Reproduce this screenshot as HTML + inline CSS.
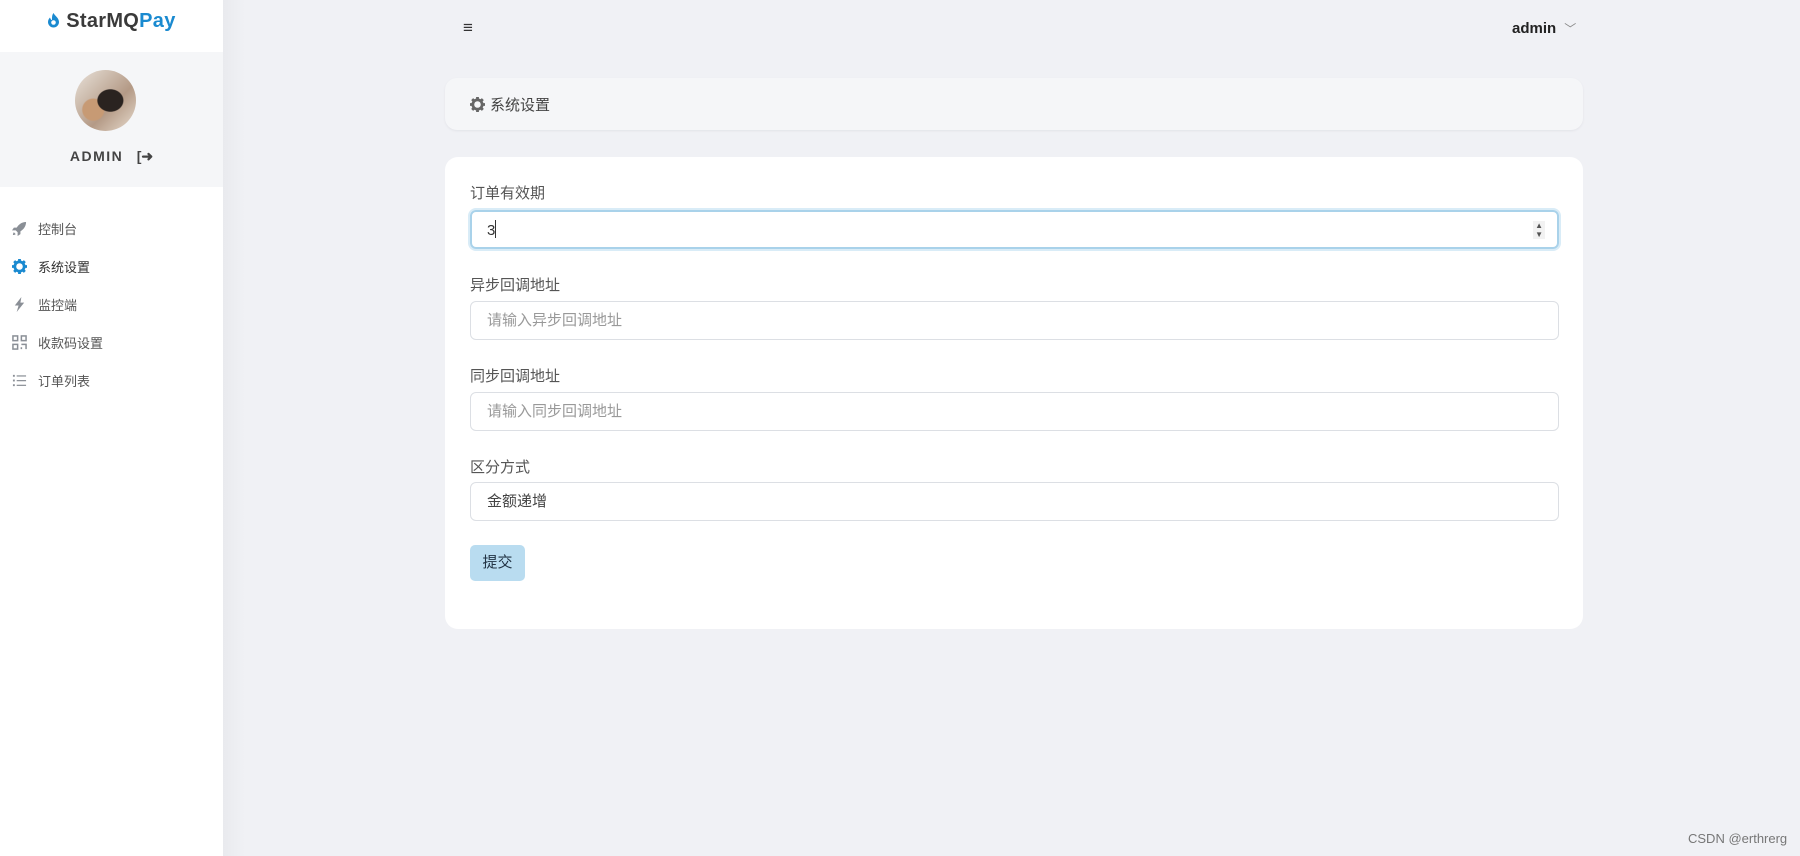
<!DOCTYPE html>
<html><head><meta charset="utf-8">
<style>
*{box-sizing:border-box;margin:0;padding:0}
body{width:1800px;height:856px;overflow:hidden;background:#f0f1f5;font-family:"Liberation Sans","Noto Sans CJK SC",sans-serif;position:relative;color:#555}
.side{position:absolute;left:0;top:0;width:223px;height:856px;background:#fff}
.shadow{position:absolute;left:223px;top:0;width:22px;height:856px;background:linear-gradient(90deg,#e9eaee,#f0f1f5)}
.logo{position:absolute;top:10px;left:0;width:223px;text-align:center;font-weight:bold;font-size:20px;color:#3a3a3a;letter-spacing:.3px}
.logo b{color:#1a8ad0}
.prof{position:absolute;top:52px;left:0;width:223px;height:135px;background:#f5f6f8}
.av{position:absolute;left:75px;top:18px;width:61px;height:61px;border-radius:50%;background:radial-gradient(ellipse at 58% 50%,#2a2320 0 25%,transparent 27%),radial-gradient(circle at 30% 65%,#c79a74 0 18%,transparent 20%),linear-gradient(135deg,#e9e2da,#b49a86 60%,#e8dccf)}
.adm{position:absolute;top:96px;left:0;width:223px;text-align:center;font-weight:bold;font-size:14px;letter-spacing:1.5px;color:#444}
.menu{position:absolute;left:0;top:209px;width:223px}
.mi{height:38px;display:flex;align-items:center;font-size:13px;color:#555}
.mi svg{margin-left:12px;margin-right:11px;width:15px;height:15px}
.top-h{position:absolute;left:463px;top:18px;font-size:17px;color:#333}
.user{position:absolute;left:1512px;top:20px;font-weight:bold;font-size:15px;color:#222}
.user span{color:#888;font-weight:normal;font-size:12px;margin-left:8px}
.hcard{position:absolute;left:445px;top:78px;width:1138px;height:52px;background:#f5f6f8;border-radius:12px;box-shadow:0 1px 2px #e2e3e8;font-size:15px;color:#444;display:flex;align-items:center;padding-left:25px}
.card{position:absolute;left:445px;top:157px;width:1138px;height:472px;background:#fff;border-radius:13px}
.lbl{position:absolute;left:25px;font-size:15px;color:#555}
.inp{position:absolute;left:25px;width:1089px;height:39px;border:1px solid #dcdfe4;border-radius:6px;font-size:15px;color:#999;padding-left:16px;line-height:37px}
.inp.f{border:2px solid #a9d2ea;box-shadow:0 0 0 2px #d9ecf7;color:#333;padding-left:15px}
.btn{position:absolute;left:25px;top:388px;width:55px;height:36px;background:#b9dcf0;border-radius:5px;font-size:15px;color:#234;text-align:center;line-height:36px}
.wm{position:absolute;left:1688px;top:831px;font-size:13px;color:#777}
</style></head><body>
<div class="side">
 <div class="logo"><svg width="13" height="16" viewBox="0 0 13 16" style="vertical-align:-1px"><path d="M6.5 1C8 4 12 6 12 10a5.5 5.5 0 0 1-11 0c0-2 1-3.5 2-4.5C3.5 7 4 8 5 8 5 5 5 3 6.5 1z" fill="#1a8ad0"/><circle cx="6.5" cy="10.5" r="2.3" fill="#fff"/></svg> StarMQ<b>Pay</b></div>
 <div class="prof"><div class="av"></div><div class="adm">ADMIN <span style="margin-left:8px;font-size:14px;letter-spacing:0">[➜</span></div></div>
 <div class="menu">
  <div class="mi"><svg viewBox="0 0 16 16"><path d="M15 1C10 1 7 4 5 7L2 7 0 10l4 0 2 2 0 4 3-2 0-3c3-2 6-5 6-10zM2 12c-1 1-1 3-1 3s2 0 3-1z" fill="#8a8f96"/></svg>控制台</div>
  <div class="mi" style="color:#333"><svg viewBox="0 0 16 16"><circle cx="8" cy="8" r="5" fill="none" stroke="#1a8ad0" stroke-width="3"/><g stroke="#1a8ad0" stroke-width="3"><path d="M8 0v3M8 13v3M0 8h3M13 8h3M2.3 2.3l2 2M11.7 11.7l2 2M2.3 13.7l2-2M11.7 4.3l2-2"/></g><circle cx="8" cy="8" r="2" fill="#fff"/></svg>系统设置</div>
  <div class="mi"><svg viewBox="0 0 16 16"><path d="M10 0L3 9h4l-2 7 8-10H9z" fill="#8a8f96"/></svg>监控端</div>
  <div class="mi"><svg viewBox="0 0 16 16" fill="none" stroke="#8a8f96" stroke-width="1.6"><rect x="1" y="1" width="5" height="5"/><rect x="10" y="1" width="5" height="5"/><rect x="1" y="10" width="5" height="5"/><path d="M10 10h5v5M10 13v2"/></svg>收款码设置</div>
  <div class="mi"><svg viewBox="0 0 16 16" fill="#8a8f96"><rect x="1" y="2" width="2" height="2"/><rect x="1" y="7" width="2" height="2"/><rect x="1" y="12" width="2" height="2"/><rect x="5" y="2.5" width="10" height="1.3"/><rect x="5" y="7.5" width="10" height="1.3"/><rect x="5" y="12.5" width="10" height="1.3"/></svg>订单列表</div>
 </div>
</div>
<div class="shadow"></div>
<div class="top-h">≡</div>
<div class="user">admin<span>﹀</span></div>
<div class="hcard"><svg width="15" height="15" viewBox="0 0 16 16" style="margin-right:5px"><circle cx="8" cy="8" r="5" fill="none" stroke="#666" stroke-width="3"/><g stroke="#666" stroke-width="3"><path d="M8 0v3M8 13v3M0 8h3M13 8h3M2.3 2.3l2 2M11.7 11.7l2 2M2.3 13.7l2-2M11.7 4.3l2-2"/></g><circle cx="8" cy="8" r="2" fill="#f5f6f8"/></svg>系统设置</div>
<div class="card">
 <div class="lbl" style="top:25px">订单有效期</div>
 <div class="inp f" style="top:53px">3<span style="display:inline-block;width:1px;height:18px;background:#333;vertical-align:-3px"></span><span style="position:absolute;right:12px;top:9px;font-size:8px;line-height:9px;color:#555;background:#f2f2f2;padding:0 2px">▲<br>▼</span></div>
 <div class="lbl" style="top:117px">异步回调地址</div>
 <div class="inp" style="top:144px">请输入异步回调地址</div>
 <div class="lbl" style="top:208px">同步回调地址</div>
 <div class="inp" style="top:235px">请输入同步回调地址</div>
 <div class="lbl" style="top:299px">区分方式</div>
 <div class="inp" style="top:325px;color:#444">金额递增</div>
 <div class="btn">提交</div>
</div>
<div class="wm">CSDN @erthrerg</div>
</body></html>
